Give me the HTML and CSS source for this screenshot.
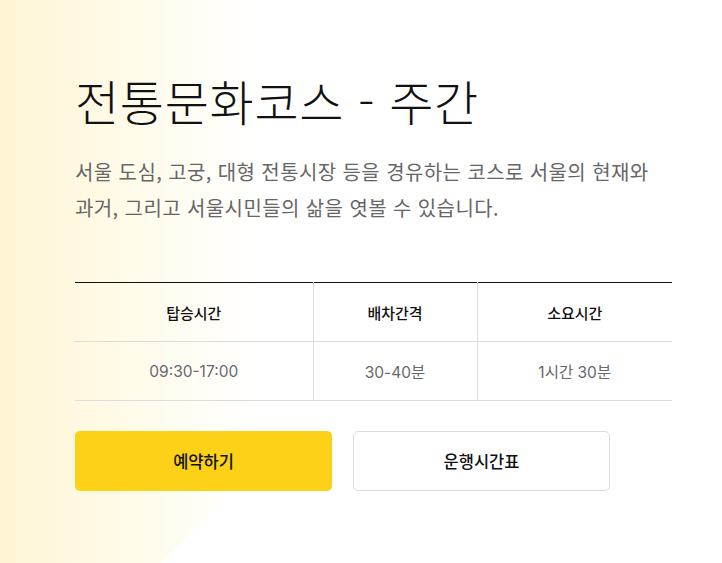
FILE: index.html
```html
<!DOCTYPE html>
<html lang="ko">
<head>
    <meta charset="UTF-8">
    <meta name="viewport" content="width=device-width, initial-scale=1.0">
    <title>전통문화코스 - 주간</title>
    <link rel="stylesheet" href="styles.css">
</head>
<body>
    <div class="course">
        <h1 class="course-title">전통문화코스 - 주간</h1>
        <p class="course-desc">서울 도심, 고궁, 대형 전통시장 등을 경유하는 코스로 서울의 현재와 과거, 그리고 서울시민들의 삶을 엿볼 수 있습니다.</p>

        <table class="course-info">
            <colgroup>
                <col class="col-time">
                <col class="col-interval">
                <col class="col-duration">
            </colgroup>
            <thead>
                <tr>
                    <th>탑승시간</th>
                    <th>배차간격</th>
                    <th>소요시간</th>
                </tr>
            </thead>
            <tbody>
                <tr>
                    <td>09:30-17:00</td>
                    <td>30-40분</td>
                    <td>1시간 30분</td>
                </tr>
            </tbody>
        </table>

        <div class="course-actions">
            <button class="btn btn-primary">예약하기</button>
            <button class="btn btn-outline">운행시간표</button>
        </div>
    </div>
</body>
</html>
```

FILE: styles.css
```css
html {
    background-color: #fff;
}
body {
    margin: 0;
    min-height: 100vh;
    font-family: 'Noto Sans CJK KR', 'Noto Sans', sans-serif;
    color: #111;
    background-color: #fff;
    background-image:
        linear-gradient(135deg, transparent 50%, #fff 50%),
        linear-gradient(90deg, #fff5d4 0%, #fffbea 18%, #fff 36%);
    background-size: 725px 725px, 725px 725px;
    background-repeat: no-repeat;
}
.course {
    width: 597px;
    padding: 69px 0 0 75px;
}
.course-title {
    margin: 0;
    font-size: 48px;
    font-weight: 300;
    line-height: 1.3;
    letter-spacing: 0.7px;
    color: #111;
}
.course-desc {
    margin: 23px 0 0;
    font-size: 20px;
    line-height: 36px;
    color: #666;
    letter-spacing: 0.4px;
}
.course-info {
    width: 100%;
    margin-top: 56px;
    border-collapse: collapse;
    border-top: 1px solid #111;
    font-size: 15px;
}
.col-time {
    width: 238px;
}
.col-interval {
    width: 164px;
}
.course-info th,
.course-info td {
    height: 58px;
    padding: 0;
    text-align: center;
    border-bottom: 1px solid #ddd;
    border-left: 1px solid #ddd;
}
.course-info th:first-child,
.course-info td:first-child {
    border-left: none;
}
.course-info th {
    font-weight: 500;
    color: #111;
}
.course-info td {
    font-family: Inter, 'Noto Sans CJK KR', sans-serif;
    color: #666870;
    font-size: 15.5px;
}
.course-actions {
    display: flex;
    gap: 21px;
    margin-top: 30px;
}
.btn {
    width: 257px;
    height: 60px;
    border-radius: 5px;
    font-family: inherit;
    font-size: 16.5px;
    font-weight: 500;
    color: #111;
    cursor: pointer;
}
.btn-primary {
    border: none;
    background-color: #fdd117;
}
.btn-outline {
    border: 1px solid #ddd;
    background-color: #fff;
}
```
